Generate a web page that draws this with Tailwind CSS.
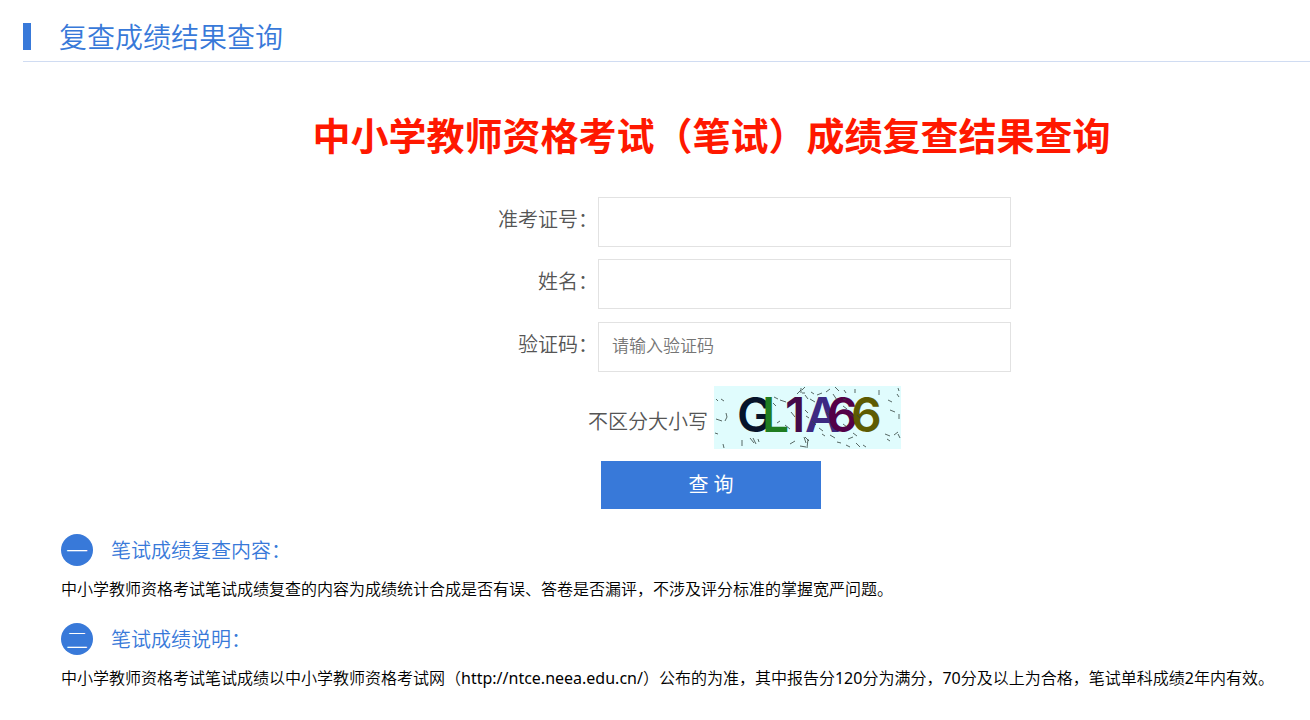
<!DOCTYPE html>
<html lang="zh-CN">
<head>
<meta charset="utf-8">
<meta name="viewport" content="width=device-width, initial-scale=1">
<title>复查成绩结果查询</title>
<script src="https://cdn.jsdelivr.net/npm/@tailwindcss/browser@4"></script>
</head>
<body class="bg-white pl-[23px] font-['Noto_Sans','Noto_Sans_CJK_SC',sans-serif] font-[350] text-[#555]">
<header class="flex h-[62px] items-center border-b border-[#d0dcf2] pt-3">
  <span class="h-[27px] w-2 bg-[#3879d9]"></span>
  <h2 class="ml-7 text-[28px] leading-10 text-[#3879d9]">复查成绩结果查询</h2>
</header>
<main>
  <div class="pl-[90px]">
    <h1 class="pt-12 text-center text-[38px] leading-[50px] font-bold text-[#ff1800]">中小学教师资格考试（笔试）成绩复查结果查询</h1>
    <form class="mx-auto mt-[37px] flex max-w-[599px] flex-col gap-3">
      <div class="flex items-start">
        <label for="ticket" class="w-[186px] text-right text-xl leading-[46px]">准考证号：</label>
        <input id="ticket" type="text" class="h-[50px] min-w-0 flex-1 border border-[#e2e2e2] px-[13px] text-[17px] outline-none">
      </div>
      <div class="flex items-start">
        <label for="name" class="w-[186px] text-right text-xl leading-[46px]">姓名：</label>
        <input id="name" type="text" class="h-[50px] min-w-0 flex-1 border border-[#e2e2e2] px-[13px] text-[17px] outline-none">
      </div>
      <div class="mt-px flex items-start">
        <label for="code" class="w-[186px] text-right text-xl leading-[46px]">验证码：</label>
        <input id="code" type="text" placeholder="请输入验证码" class="h-[50px] min-w-0 flex-1 border border-[#e2e2e2] px-[13px] pb-1 text-[17px] outline-none placeholder:text-[#757575]">
      </div>
      <div class="mt-0.5 flex items-center gap-1.5 pl-[176px]">
        <span class="pt-2 text-xl leading-7">不区分大小写</span>
        <svg class="h-[63px] w-[187px] shrink-0" viewBox="0 0 187 63" role="img" aria-label="验证码图片">
          <rect width="187" height="63" fill="#e0fcfd"/>
          <g font-family="Inter, sans-serif" font-weight="600" font-size="48">
            <text x="23" y="46" fill="#07142a">G</text>
            <text x="48" y="46" fill="#1f7d20">L</text>
            <text x="71" y="46" fill="#440a48">1</text>
            <text x="91" y="46" fill="#3d2a82">A</text>
            <text x="113" y="46" fill="#540047">6</text>
            <text x="137" y="46" fill="#5d5b02">6</text>
          </g>
          <path fill="none" stroke="#35443f" stroke-opacity=".8" stroke-width="1" d="M2 13l2 2M7 13l3 2M2 33l6 2M12 27l1 4l-2 4M1 47l3 1M9 58l1 4M28 54v6M36 52l4 5M39 52l3 6M44 53l1 3M60 11l4 2M66 14l6 2M59 17l3 3M66 35l-3 2M71 39l5 4M77 26l4 5M81 55l-5 3M83 8l4-4M88 4l3-3M88 7h3M87 2v5M91 9l3 4M91 24l3 3M92 30l3 2M90 51l2 6M91 51l4 4M94 53l-1 9M86 60l6 1M97 6l3 2M103 9l5-2M112 6l4-3M121 1l4 4M119 8l4 6M96 13l5 3M112 26l3 3M98 35l4 4M105 42l4 3M108 48l3 2M116 49l5 3M130 4l2 3M129 13l3 1M132 59l4 2M142 57l4 4M149 59l3 2M141 3v4M165 4v5M174 14l4 2M184 2l1 3M183 8l2 3M176 24l5 2M185 28v5M173 53l3 2M171 48l5 2M180 49l4-3M184 48l2 4M129 20l4 3M136 28l4 3M143 29l3 3M129 38l4 3M139 47l4 3M139 51l-5 2M123 56l4 1"/>
        </svg>
      </div>
      <button type="submit" class="ml-[189px] h-12 w-[220px] bg-[#3879d9] text-xl font-normal text-white">查 询</button>
    </form>
  </div>
  <section class="mt-6 pl-[38px]">
    <div class="flex items-center gap-[18px]">
      <span class="flex size-8 items-center justify-center rounded-full bg-[#3879d9] text-[22px] leading-8 font-light text-white">一</span>
      <h3 class="pt-0.5 text-xl leading-8 text-[#3879d9]">笔试成绩复查内容：</h3>
    </div>
    <p class="mt-2 text-base leading-7 text-black">中小学教师资格考试笔试成绩复查的内容为成绩统计合成是否有误、答卷是否漏评，不涉及评分标准的掌握宽严问题。</p>
  </section>
  <section class="mt-[19px] pl-[38px]">
    <div class="flex items-center gap-[18px]">
      <span class="flex size-8 items-center justify-center rounded-full bg-[#3879d9] text-[22px] leading-8 font-light text-white">二</span>
      <h3 class="pt-0.5 text-xl leading-8 text-[#3879d9]">笔试成绩说明：</h3>
    </div>
    <p class="mt-2 text-base leading-7 text-black">中小学教师资格考试笔试成绩以中小学教师资格考试网（<span class="font-normal">http://ntce.neea.edu.cn/</span>）公布的为准，其中报告分<span class="font-normal">120</span>分为满分，<span class="font-normal">70</span>分及以上为合格，笔试单科成绩<span class="font-normal">2</span>年内有效。</p>
  </section>
</main>
</body>
</html>
